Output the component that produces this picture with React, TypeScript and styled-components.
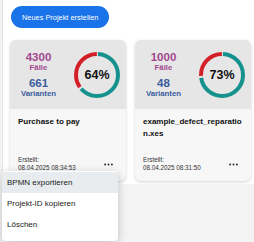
import React from "react";
import styled, { createGlobalStyle } from "styled-components";

const Global = createGlobalStyle`
  html, body { margin: 0; padding: 0; }
  body {
    background: #f3f3f3;
    font-family: "Liberation Sans", Arial, sans-serif;
    width: 254px;
    height: 242px;
    overflow: hidden;
  }
`;

const Panel = styled.div`
  margin-left: 2px;
  border-left: 1px solid #e4e4e4;
  background: #ffffff;
  padding: 6px 0 3px 7px;
  display: flex;
  flex-direction: column;
  gap: 12px;
`;

const NewButton = styled.button`
  align-self: flex-start;
  margin-left: 1px;
  height: 22px;
  padding: 0 11px;
  border: none;
  border-radius: 11px;
  background: #1a73e8;
  color: #fff;
  font-family: inherit;
  font-size: 7.4px;
  cursor: pointer;
`;

const CardRow = styled.div`
  display: flex;
  gap: 9px;
`;

const Card = styled.div`
  position: relative;
  width: 116px;
  height: 141px;
  border-radius: 6px;
  background: #f7f7f7;
  box-shadow: 0 1px 3px rgba(0, 0, 0, 0.18);
  display: flex;
  flex-direction: column;
`;

const CardTop = styled.div`
  height: 69px;
  background: #e6e6e6;
  border-radius: 6px 6px 0 0;
  display: grid;
  grid-template-columns: 57px 1fr;
  align-items: center;
`;

const Stats = styled.div`
  display: flex;
  flex-direction: column;
  align-items: center;
`;

const StatValue = styled.div<{ $color: string; $gap?: boolean }>`
  color: ${(p) => p.$color};
  font-weight: 700;
  font-size: 11.5px;
  line-height: 12px;
  margin-top: ${(p) => (p.$gap ? "5px" : "0")};
`;

const StatLabel = styled.div<{ $color: string }>`
  color: ${(p) => p.$color};
  font-weight: 700;
  font-size: 7.8px;
  line-height: 9px;
`;

const DonutWrap = styled.div`
  position: relative;
  width: 46px;
  height: 46px;
  justify-self: center;
  margin-left: 1px;
`;

const DonutLabel = styled.div`
  position: absolute;
  inset: 0;
  display: flex;
  align-items: center;
  justify-content: center;
  font-weight: 700;
  font-size: 12.5px;
  color: #111;
`;

const CardBody = styled.div`
  flex: 1;
  display: flex;
  flex-direction: column;
  padding: 7px 8px 10px 8px;
`;

const Title = styled.div`
  font-weight: 700;
  font-size: 8px;
  line-height: 12px;
  color: #111;
  word-break: break-all;
  flex: 1;
`;

const Footer = styled.div`
  display: flex;
  align-items: center;
  justify-content: space-between;
`;

const Meta = styled.div`
  font-size: 6.3px;
  line-height: 7.5px;
  color: #333;
`;

const MoreButton = styled.button`
  border: none;
  background: transparent;
  padding: 0;
  margin-right: 5px;
  margin-top: 2px;
  display: flex;
  cursor: pointer;
`;

const Menu = styled.div`
  position: absolute;
  left: -8px;
  top: 131px;
  width: 116px;
  background: #fff;
  border-radius: 4px;
  box-shadow: 0 2px 8px rgba(0, 0, 0, 0.22);
  padding: 1px 0 6px;
  display: flex;
  flex-direction: column;
  z-index: 5;
`;

const MenuItem = styled.div<{ $active?: boolean }>`
  height: 21px;
  display: flex;
  align-items: center;
  padding-left: 5px;
  font-size: 8px;
  color: #222;
  background: ${(p) => (p.$active ? "#e9ecef" : "transparent")};
`;

const Donut = ({ pct }: { pct: number }) => {
  const r = 21;
  const c = 2 * Math.PI * r;
  const gap = 2;
  const teal = (pct / 100) * c;
  const red = c - teal;
  return (
    <svg width="46" height="46" viewBox="0 0 46 46">
      <g transform="rotate(-90 23 23)">
        <circle
          cx="23"
          cy="23"
          r={r}
          fill="none"
          stroke="#15928d"
          strokeWidth="4"
          strokeDasharray={`${teal - gap} ${c}`}
          strokeDashoffset={-gap / 2}
        />
        <circle
          cx="23"
          cy="23"
          r={r}
          fill="none"
          stroke="#d21f28"
          strokeWidth="4"
          strokeDasharray={`${red - gap} ${c}`}
          strokeDashoffset={-(teal + gap / 2)}
        />
      </g>
    </svg>
  );
};

const Dots = () => (
  <svg width="9" height="3" viewBox="0 0 9 3">
    <circle cx="1.1" cy="1.5" r="1" fill="#333" />
    <circle cx="4.5" cy="1.5" r="1" fill="#333" />
    <circle cx="7.9" cy="1.5" r="1" fill="#333" />
  </svg>
);

type Project = {
  cases: string;
  variants: string;
  pct: number;
  name: string;
  created: string;
  menu?: boolean;
};

const projects: Project[] = [
  { cases: "4300", variants: "661", pct: 64, name: "Purchase to pay", created: "08.04.2025 08:34:53", menu: true },
  { cases: "1000", variants: "48", pct: 73, name: "example_defect_reparation.xes", created: "08.04.2025 08:31:50" },
];

const PURPLE = "#a3478f";
const BLUE = "#3a5d9c";

export default function App() {
  return (
    <>
      <Global />
      <Panel>
        <NewButton>Neues Projekt erstellen</NewButton>
        <CardRow>
          {projects.map((p) => (
            <Card key={p.name}>
              <CardTop>
                <Stats>
                  <StatValue $color={PURPLE}>{p.cases}</StatValue>
                  <StatLabel $color={PURPLE}>Fälle</StatLabel>
                  <StatValue $color={BLUE} $gap>
                    {p.variants}
                  </StatValue>
                  <StatLabel $color={BLUE}>Varianten</StatLabel>
                </Stats>
                <DonutWrap>
                  <Donut pct={p.pct} />
                  <DonutLabel>{p.pct}%</DonutLabel>
                </DonutWrap>
              </CardTop>
              <CardBody>
                <Title>{p.name}</Title>
                <Footer>
                  <Meta>
                    Erstellt:
                    <br />
                    {p.created}
                  </Meta>
                  <MoreButton aria-label="Mehr">
                    <Dots />
                  </MoreButton>
                </Footer>
              </CardBody>
              {p.menu && (
                <Menu>
                  <MenuItem $active>BPMN exportieren</MenuItem>
                  <MenuItem>Projekt-ID kopieren</MenuItem>
                  <MenuItem>Löschen</MenuItem>
                </Menu>
              )}
            </Card>
          ))}
        </CardRow>
      </Panel>
    </>
  );
}
